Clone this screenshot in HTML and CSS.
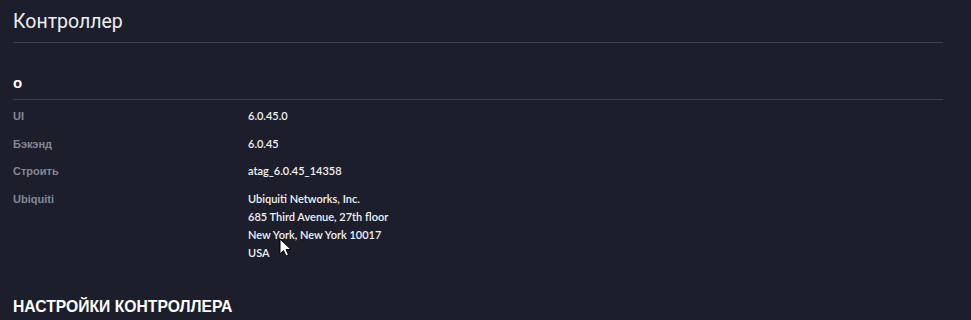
FILE: index.html
```html
<!DOCTYPE html>
<html lang="ru">
<head>
<meta charset="utf-8">
<link rel="stylesheet" href="styles.css">
</head>
<body>
<div class="page">
  <h1 class="title">Контроллер</h1>
  <section class="section">
    <h2 class="section-head">о</h2>
    <div class="rows">
      <div class="row"><div class="label">UI</div><div class="value">6.0.45.0</div></div>
      <div class="row"><div class="label">Бэкэнд</div><div class="value">6.0.45</div></div>
      <div class="row"><div class="label">Строить</div><div class="value">atag_6.0.45_14358</div></div>
      <div class="row"><div class="label">Ubiquiti</div><div class="value multi">Ubiquiti Networks, Inc.<br>685 Third Avenue, 27th floor<br>New York, New York 10017<br>USA</div></div>
    </div>
  </section>
  <h2 class="section-head plain">НАСТРОЙКИ КОНТРОЛЛЕРА</h2>
</div>
<svg class="cursor" width="14" height="20" viewBox="0 0 14 20"><path d="M1 1 L1 16 L4.5 12.5 L7 18 L9.5 17 L7 11.5 L12 11.5 Z" fill="#fff" stroke="#000" stroke-width="1"/></svg>
</body>
</html>
```
FILE: styles.css
```css
html, body { margin: 0; padding: 0; background: #1c1e2b; }
body { width: 971px; height: 320px; overflow: hidden; position: relative; }
.page { padding: 0 28px 0 13px; }
.title {
  margin: 0;
  padding-top: 9px;
  height: 33px;
  font-family: Roboto, "Liberation Sans", sans-serif;
  font-weight: 400;
  font-size: 19.5px;
  line-height: 25px;
  color: #eceef2;
  border-bottom: 1px solid #3b3e4b;
}
.section-head {
  margin: 0;
  font-family: "Liberation Sans", Arial, sans-serif;
  font-weight: 700;
  font-size: 15px;
  color: #ffffff;
  padding-top: 31px;
  height: 25px;
  line-height: 18px;
  border-bottom: 1px solid #3b3e4b;
}
.section-head.plain { border-bottom: none; padding-top: 36px; font-size: 15.7px; }
.rows { padding-top: 7px; }
.row { display: flex; min-height: 27.5px; }
.label {
  width: 235px;
  font-family: "Liberation Sans", Arial, sans-serif;
  font-size: 11px;
  font-weight: 700;
  color: #858894;
  line-height: 18px;
}
.value {
  font-family: Lato, sans-serif;
  font-size: 11px;
  font-weight: 600;
  color: #f2f3f5;
  line-height: 18px;
}
.cursor { position: absolute; left: 279px; top: 238px; }
```
